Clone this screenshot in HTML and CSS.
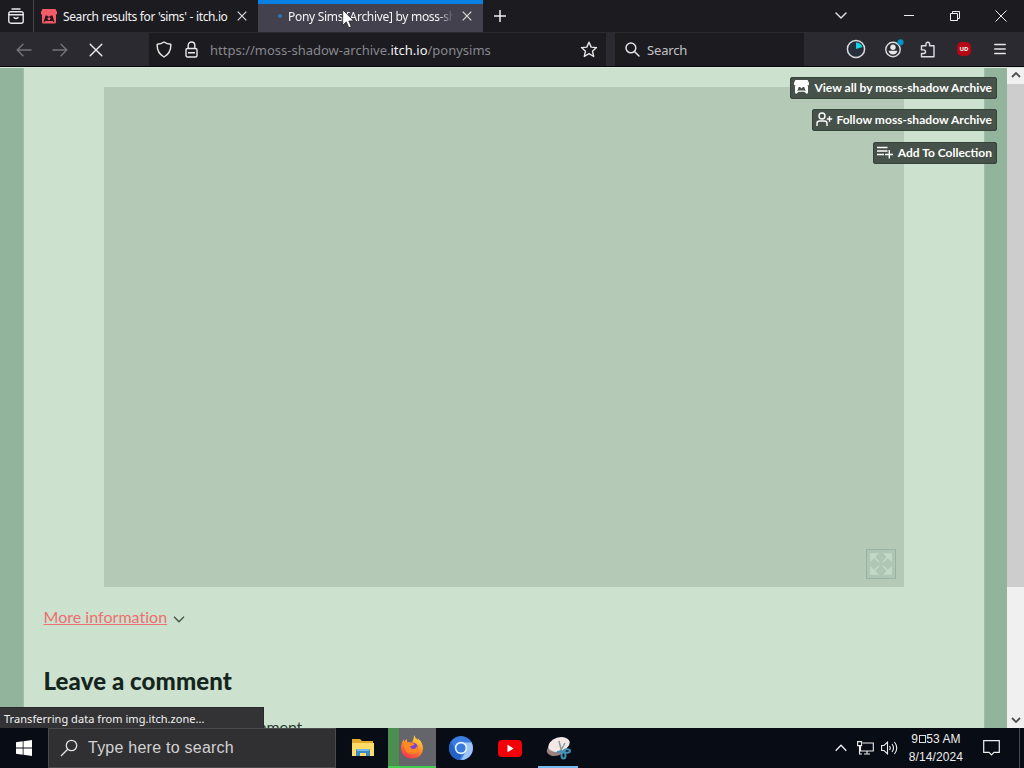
FILE: index.html
```html
<!DOCTYPE html>
<html lang="en">
<head>
<meta charset="utf-8">
<title>Pony Sims [Archive] by moss-shadow Archive</title>
<link rel="stylesheet" href="styles.css">
</head>
<body>
<div class="desktop">
  <header class="tabs">
    <div class="firefox-view">
      <svg width="16" height="16" viewBox="0 0 16 16" fill="none" stroke="#e8e8ea" stroke-width="1.4" stroke-linecap="round"><path d="M4 1h8"/><rect x=".8" y="3.700" width="14.4" height="11.500" rx="2"/><path d="M1 6.700h14M6 9.500q2 2 4 0"/></svg>
    </div>
    <div class="tab">
      <svg class="favicon" width="16" height="15" viewBox="0 0 16 15"><path fill="#f35b67" d="M1.5 0h13L16 3v2q-1 1.5-2.6.3H2.600Q1 6.500 0 5V3zM1 5h14v8q0 2-2 1.500H3Q1 15 1 13z"/><path fill="#29151b" d="M4.500 6.500H6l1 1h2l1-1h1.500l2 7-2-1.500h-7l-2 1.500zM8 8l-2 2h1v1h2v-1h1z"/></svg>
      <span class="tab-title first-title">Search results for 'sims' - itch.io</span>
      <svg class="tab-close" width="10" height="10" viewBox="0 0 10 10" stroke="#ddd" stroke-width="1.2"><path d="M.7.7l8.600 8.600M9.300.7L.7 9.300"/></svg>
    </div>
    <div class="tab active">
      <i class="loading"></i>
      <span class="tab-title second-title">Pony Sims [Archive] by moss-sh</span>
      <svg class="tab-close" width="10" height="10" viewBox="0 0 10 10" stroke="#ddd" stroke-width="1.2"><path d="M.7.7l8.600 8.600M9.300.7L.7 9.300"/></svg>
      <svg class="pointer" width="13" height="20" viewBox="0 0 13 20"><path d="M.7.7v15.600l3.600-3.400 2.500 5.900 2.500-1-2.500-5.800h5z" fill="#fff" stroke="#222" stroke-width=".8"/></svg>
    </div>
    <svg class="new-tab" width="12" height="12" viewBox="0 0 12 12" stroke="#eee" stroke-width="1.500"><path d="M6 0v12M0 6h12"/></svg>
    <div class="window-controls">
      <svg width="12" height="8" viewBox="0 0 12 8" fill="none" stroke="#ddd" stroke-width="1.500" stroke-linecap="round"><path d="M1 1l5 5 5-5"/></svg>
      <svg class="minimize" width="10" height="10" viewBox="0 0 10 10" stroke="#eee"><path d="M0 4.500h10"/></svg>
      <svg class="restore" width="10" height="10" viewBox="0 0 10 10" fill="none" stroke="#eee"><path d="M.5 2.500h7v7h-7zM2.500 2.500v-2h7v7h-2"/></svg>
      <svg class="exit" width="12" height="12" viewBox="0 0 12 12" stroke="#eee"><path d="M.5.5l11 11M11.500.5l-11 11"/></svg>
    </div>
  </header>

  <nav class="toolbar">
    <div class="history">
      <svg width="16" height="14" viewBox="0 0 16 14" fill="none" stroke="#74747a" stroke-width="1.400" stroke-linecap="round" stroke-linejoin="round"><path d="M15 7H1.500M7 1.200L1.200 7 7 12.800"/></svg>
      <svg width="16" height="14" viewBox="0 0 16 14" fill="none" stroke="#74747a" stroke-width="1.400" stroke-linecap="round" stroke-linejoin="round"><path d="M1 7h13.500M9 1.200L14.800 7 9 12.800"/></svg>
      <svg class="stop" width="14" height="14" viewBox="0 0 14 14" stroke="#ececee" stroke-width="1.400" stroke-linecap="round"><path d="M1.200 1.200l11.600 11.600M12.800 1.200L1.200 12.800"/></svg>
    </div>
    <div class="address">
      <svg width="16" height="17" viewBox="0 0 16 17" fill="none" stroke="#e8e8e8" stroke-width="1.400" stroke-linejoin="round"><path d="M8 1q3 2.300 6.800 2.300Q15.300 11.800 8 16 .7 11.800 1.200 3.300 5 3.300 8 1z"/></svg>
      <svg class="lock" width="13" height="17" viewBox="0 0 13 17" fill="none" stroke="#e8e8e8" stroke-width="1.400"><rect x="1" y="7.500" width="11" height="8.500" rx="1.500"/><path d="M3.200 7V4.300a3.300 3.300 0 016.600 0V7M3 11.700h7"/></svg>
      <span class="url">https://moss-shadow-archive.<b>itch.io</b>/ponysims</span>
      <svg class="star" width="18" height="17" viewBox="0 0 18 17" fill="none" stroke="#e8e8e8" stroke-width="1.400" stroke-linejoin="round"><path d="M9 1.200l2.200 4.900 5.300.5-4 3.600 1.200 5.300L9 12.700l-4.700 2.800 1.200-5.300-4-3.600 5.300-.5z"/></svg>
    </div>
    <div class="search">
      <svg width="15" height="15" viewBox="0 0 15 15" fill="none" stroke="#e2e2e4" stroke-width="1.500" stroke-linecap="round"><circle cx="5.900" cy="5.900" r="4.900"/><path d="M9.500 9.500l4.500 4.500"/></svg>
      <span>Search</span>
    </div>
    <div class="extensions">
      <svg width="20" height="20" viewBox="0 0 20 20"><circle cx="10" cy="10" r="8.600" fill="#27303a" stroke="#dadade" stroke-width="1.500"/><path d="M10 10V3.500A7.500 7.500 0 0116.500 8z" fill="#10d3e5"/></svg>
      <svg class="account" width="20" height="20" viewBox="0 0 20 20"><circle cx="9" cy="10.500" r="7.200" fill="none" stroke="#dedee0" stroke-width="1.400"/><circle cx="9" cy="8.300" r="2.700" fill="#e8e8e8"/><path d="M4.500 11.800h9q-.8 3.700-4.500 3.700t-4.500-3.700z" fill="#e8e8e8"/><circle cx="16.500" cy="3.300" r="3.100" fill="#0094c8"/></svg>
      <svg class="puzzle" width="16" height="17" viewBox="0 0 16 17" fill="none" stroke="#dedee0" stroke-width="1.400" stroke-linejoin="round"><path d="M1.500 7V4.800H6V3a1.800 1.800 0 013.600 0v1.800H14v11H1.500v-3.300h2.200a1.800 1.800 0 000-3.600H1.500z"/></svg>
      <span class="ublock">UD</span>
      <svg class="menu" width="12" height="12" viewBox="0 0 12 12" stroke="#e8e8e8" stroke-width="1.300" stroke-linecap="round"><path d="M.7 1.500h10.600M.7 6h10.600M.7 10.500h10.600"/></svg>
    </div>
  </nav>

  <div class="viewport">
    <main class="page">
      <section class="game">
        <span class="fullscreen"><svg width="24" height="24" viewBox="0 0 24 24" fill="#c3dac8" stroke="#c3dac8" stroke-width="1.600"><path d="M2 2h6L2 8zM22 2h-6l6 6zM2 22h6l-6-6zM22 22h-6l6-6z"/><path d="M4 4l6 6M20 4l-6 6M4 20l6-6M20 20l-6-6"/></svg></span>
      </section>
      <div class="more"><a>More information</a><svg width="12" height="7" viewBox="0 0 12 7" fill="none" stroke="#3e5548" stroke-width="1.300"><path d="M1 .8l5 5 5-5"/></svg></div>
      <h2>Leave a comment</h2>
      <p>Log in with itch.io to leave a comment.</p>
    </main>
    <aside class="scrollbar">
      <svg width="10" height="6" viewBox="0 0 10 6" fill="none" stroke="#505050" stroke-width="1.800"><path d="M1 5l4-4 4 4"/></svg>
      <div class="track"><div class="thumb"></div></div>
      <svg width="10" height="6" viewBox="0 0 10 6" fill="none" stroke="#505050" stroke-width="1.800"><path d="M1 1l4 4 4-4"/></svg>
    </aside>
    <div class="user-tools">
      <a class="view"><svg width="15" height="14" viewBox="0 0 16 15"><path fill="#fff" fill-rule="evenodd" d="M1.500 0h13L16 3v2q-1 1.500-2.600.3H2.600Q1 6.500 0 5V3zM1 5.300h14V13q0 2-2 1.500L11 12.500H5l-2 2Q1 15 1 13zM5 7.500L3.500 12l1.500-.8h6l1.500.8L11 7.500H9.500L8 9 6.500 7.500z"/></svg><span>View all by moss-shadow Archive</span></a>
      <a class="follow"><svg width="17" height="15" viewBox="0 0 17 15" fill="none" stroke="#fff" stroke-width="1.400"><circle cx="6" cy="4" r="3"/><path d="M1 14v-2.500Q1 9 3.500 9h5Q11 9 11 11.500V14M13.500 4.200v5.600M10.800 7h5.400"/></svg><span>Follow moss-shadow Archive</span></a>
      <a class="collect"><svg width="16" height="13" viewBox="0 0 16 13" fill="none" stroke="#fff" stroke-width="1.400"><path d="M0 1.500h10.500M0 5h10.500M0 8.500h7M12.300 4v8.500M8 8.500h8"/></svg><span>Add To Collection</span></a>
    </div>
    <div class="status"><span>Transferring data from img.itch.zone...</span></div>
  </div>

  <footer class="taskbar">
    <div class="start"><svg width="16" height="16" viewBox="0 0 16 16" fill="#fff"><path d="M0 2.300l6.700-1v6.300H0zM7.500 1.200L16 0v7.600H7.500zM0 8.400h6.700v6.300l-6.700-1zM7.500 8.400H16V16l-8.500-1.200z"/></svg></div>
    <div class="task-search"><svg width="18" height="18" viewBox="0 0 18 18" fill="none" stroke="#e2e2e2" stroke-width="1.300"><circle cx="11.500" cy="6.500" r="5.200"/><path d="M7.700 10.300L1 17"/></svg><span>Type here to search</span></div>
    <div class="apps">
      <div class="app"><svg width="22" height="20" viewBox="0 0 22 20"><path fill="#e4aa2a" d="M0 1h8l2 2h11v5H0z"/><path fill="#ffdb68" d="M0 5h22v13H0z"/><path fill="#3e87c9" d="M4 18v-6q0-1 1-1h12q1 0 1 1v6h-4v-3H8v3z"/><path fill="#75b9ea" d="M5 11h12v2H5z"/></svg></div>
      <div class="app current"><svg width="24" height="24" viewBox="0 0 24 24"><defs><linearGradient id="flame" x1=".8" y1="0" x2=".3" y2="1"><stop stop-color="#ffe24a"/><stop offset=".45" stop-color="#ff9725"/><stop offset="1" stop-color="#f72f51"/></linearGradient></defs><path fill="url(#flame)" d="M14 0q1 3 4 5 0-1-.5-2 6 5 5.500 11Q22 23 12.500 23.500 2 23.500 1 13.500.8 8 4 4v3q1-2 3-3v3l4 1q3-3 3-8z"/><circle cx="12.500" cy="13" r="5.500" fill="#7547d4"/><path fill="#ff8a20" d="M4 8q4-2 8 0 3 .5 2 2l-4 1.500q1 3 4 2.500 3-1 3-4 3 8-4 9Q4 20 4 8z"/></svg></div>
      <div class="app"><svg width="24" height="24" viewBox="0 0 24 24"><circle cx="12" cy="12" r="12" fill="#397ee0"/><path fill="#9ec4fa" d="M12 6.500h10.600A12 12 0 0112 24l5-9z"/><path fill="#2463c6" d="M2 5.500l5 9.300q2 3 6 3L10.200 24A12 12 0 012 5.500z"/><circle cx="12" cy="12" r="6.200" fill="#e7f2ff"/><circle cx="12" cy="12" r="4.600" fill="#377bdc"/></svg></div>
      <div class="app"><svg width="24" height="17" viewBox="0 0 24 17"><rect width="24" height="17" rx="4" fill="#f40008"/><path d="M9.500 4.800v7.400l6.200-3.700z" fill="#fff"/></svg></div>
      <div class="app running"><svg width="25" height="24" viewBox="0 0 25 24"><ellipse cx="11" cy="13" rx="10.500" ry="6.500" fill="#9b8180" transform="rotate(-18 11 13)"/><ellipse cx="13" cy="8.500" rx="11" ry="7" fill="#f3e8e6" transform="rotate(-18 13 8.500)"/><path d="M13 5l2.500 10M19 7l-5 9" stroke="#8d999d" stroke-width="1.500"/><g fill="none" stroke="#4292b7" stroke-width="2"><ellipse cx="17.500" cy="19.500" rx="2" ry="3"/><ellipse cx="21" cy="15" rx="3" ry="1.800"/><path d="M11 16l6-1"/></g></svg></div>
    </div>
    <div class="tray">
      <svg width="12" height="8" viewBox="0 0 12 8" fill="none" stroke="#eee" stroke-width="1.300"><path d="M.7 6.700L6 1.200l5.300 5.500"/></svg>
      <svg class="network" width="17" height="14" viewBox="0 0 17 14" fill="none" stroke="#eee" stroke-width="1.100"><path d="M5.500 2h10.800v8H3.500V5M7 13h6M10 10v3M.6.6h4v4h-4zM2.500 5v8H5"/></svg>
      <svg class="sound" width="17" height="14" viewBox="0 0 17 14" fill="none" stroke="#eee" stroke-width="1.100"><path d="M.6 4.500H3l3.500-3.300v11.600L3 9.500H.6zM8.500 5q1.500 2 0 4M11 3q3 4 0 8M13.500 1q4.500 6 0 12"/></svg>
      <div class="clock"><span>9<i></i>53 AM</span><span class="date">8/14/2024</span></div>
      <svg class="notice" width="17" height="16" viewBox="0 0 17 16" fill="none" stroke="#eee" stroke-width="1.200"><path d="M.7.7h15.600v11.600H11L8.500 14.800 6 12.300H.7z"/></svg>
    </div>
    <div class="show-desktop"></div>
  </footer>
</div>
</body>
</html>
```

FILE: styles.css
```css
* { box-sizing: border-box; }
body { margin: 0; font-family: "Noto Sans", sans-serif; }
svg { display: block; flex: none; }
.desktop { width: 1024px; height: 768px; display: flex; flex-direction: column; overflow: hidden; }

.tabs { height: 32px; flex: none; display: flex; align-items: center; background: #1c1b20; color: #f4f4f6; font-size: 12px; }
.firefox-view { width: 34px; height: 32px; padding: 8px; border-right: 1px solid #48474c; }
.tab { width: 224px; height: 32px; display: flex; align-items: center; padding-left: 7px; position: relative; white-space: nowrap; }
.favicon { margin-right: 6px; }
.tab-title { overflow: hidden; line-height: 20px; padding-top: 1px; }
.first-title { width: 167px; letter-spacing: -.39px; word-spacing: .3px; }
.second-title { width: 166px; letter-spacing: -.3px; -webkit-mask-image: linear-gradient(90deg, #000 90%, transparent); mask-image: linear-gradient(90deg, #000 90%, transparent); }
.tab-close { margin-left: 7px; }
.active { width: 225px; padding-left: 20px; background: #42414d; border-top: 4px solid #087fe5; padding-bottom: 4px; }
.active .tab-close { margin-left: 8px; }
.loading { width: 4px; height: 4px; border-radius: 50%; background: #2778b4; margin-right: 6px; }
.pointer { position: absolute; left: 84px; top: 5px; }
.new-tab { margin-left: 11px; }
.window-controls { margin-left: auto; margin-right: 17px; display: flex; align-items: center; }
.minimize { margin-left: 57px; }
.restore { margin-left: 36px; }
.exit { margin-left: 35px; }

.toolbar { height: 35px; flex: none; display: flex; align-items: center; background: #2b2a30; border-bottom: 1px solid #08080b; color: #c2c2c6; font-size: 13px; }
.history { width: 149px; display: flex; align-items: center; padding: 1px 0 0 16px; gap: 20px; }
.stop { margin-left: 1px; }
.address { width: 457px; height: 33px; background: #1c1b20; display: flex; align-items: center; padding: 1px 8px 0 7px; }
.lock { margin-left: 13px; }
.url { margin: 1px 0 0 12px; color: #88888e; white-space: nowrap; }
.url b { color: #f2f2f4; font-weight: 400; }
.star { margin-left: auto; }
.search { width: 189px; height: 33px; margin-left: 9px; padding: 1px 0 0 10px; background: #1c1b20; display: flex; align-items: center; gap: 7px; letter-spacing: -.15px; }
.search span { margin-top: 1px; }
.extensions { margin-left: 42px; display: flex; align-items: center; }
.account { margin-left: 18px; }
.puzzle { margin-left: 16px; }
.ublock { width: 14px; height: 14px; margin-left: 21px; border-radius: 5px; background: #b80714; color: #fff; font-size: 6px; font-weight: 700; line-height: 14px; text-align: center; }
.menu { margin-left: 23px; }

.viewport { height: 661px; flex: none; display: flex; position: relative; overflow: hidden; background: #92b39c; font-family: Lato, sans-serif; border-top: 1px solid #dce5df; }
.page { width: 960px; flex: none; margin-left: 24px; padding: 19px 20px 0 19.500px; background: #cce1ce; box-shadow: 0 0 2px #b6d0bb; }
.game { width: 800px; height: 500px; margin: 0 60px 0 60.500px; padding: 0 8px 8px 0; display: flex; align-items: flex-end; justify-content: flex-end; background: #b4cab7; }
.fullscreen { width: 30px; height: 30px; padding: 2px; border: 1px solid #98b3a2; background: #aec6b4; }
.more { display: flex; align-items: center; height: 24px; margin-top: 17px; font-size: 16px; letter-spacing: .03px; }
.more a { color: #ed6f70; text-decoration: underline; }
.more svg { margin: 7px 0 0 6px; }
h2 { font-size: 24px; font-weight: 900; line-height: 30px; margin: 38px 0 0; letter-spacing: .1px; color: #14251d; white-space: nowrap; }
.page p { margin: 19px 0 0; font-size: 16px; line-height: 24px; letter-spacing: -.17px; color: #2a3b31; }
.scrollbar { width: 17px; flex: none; margin-left: auto; padding: 4px 0 5px; background: #f0f0f0; display: flex; flex-direction: column; align-items: center; }
.track { flex: 1; width: 17px; padding-top: 6px; }
.thumb { height: 503px; background: #cdcdcd; }
.user-tools { position: absolute; right: 27px; top: 8.500px; display: flex; flex-direction: column; align-items: flex-end; gap: 10.500px; color: #fff; font-size: 12px; font-weight: 700; }
.user-tools a { height: 22px; display: flex; align-items: center; background: #465249; border: 1px solid #36433b; border-radius: 2px; white-space: nowrap; padding: 0 4px 1px 3px; }
.user-tools a span { margin-left: auto; }
.view { width: 207px; letter-spacing: .02px; }
.follow { width: 185px; letter-spacing: .04px; }
.collect { width: 124px; }
.status { position: absolute; left: 0; bottom: 0; width: 264px; height: 21px; padding-left: 4px; background: #333336; border-top: 1px solid #29292b; border-right: 1px solid #29292b; color: #f3f3f3; font: 11px/21px "Noto Sans", sans-serif; letter-spacing: .05px; white-space: nowrap; }

.taskbar { height: 40px; flex: none; display: flex; background: #080c14; color: #eee; font-family: "Liberation Sans", sans-serif; }
.start { width: 48px; padding: 12px 16px; }
.task-search { width: 288px; display: flex; align-items: center; gap: 10px; padding-left: 11px; border: 1px solid #4b4b4d; background: #303032; color: #d2d2d2; font-size: 16px; letter-spacing: .24px; white-space: nowrap; }
.apps { display: flex; padding-left: 3px; }
.app { width: 49px; height: 40px; display: flex; align-items: center; justify-content: center; }
.app:first-child { padding-right: 2px; }
.current { width: 48px; border-bottom: 2px solid #43ce52; background: linear-gradient(90deg, #4b8e50 11px, #64646b 11px); }
.running { background: linear-gradient(#76b9ed, #76b9ed) 4px 38px / 40px 2px no-repeat; }
.tray { margin-left: auto; display: flex; align-items: center; }
.network { margin-left: 10px; }
.sound { margin-left: 7px; }
.clock { width: 76px; display: flex; flex-direction: column; align-items: center; font-size: 12px; line-height: 18px; letter-spacing: .1px; }
.clock i { display: inline-block; width: 7px; height: 8px; margin: 0 .5px; border: 1px solid #ddd; }
.notice { margin-left: 9px; }
.show-desktop { width: 5px; margin-left: 19px; border-left: 1px solid #454a52; }
```
